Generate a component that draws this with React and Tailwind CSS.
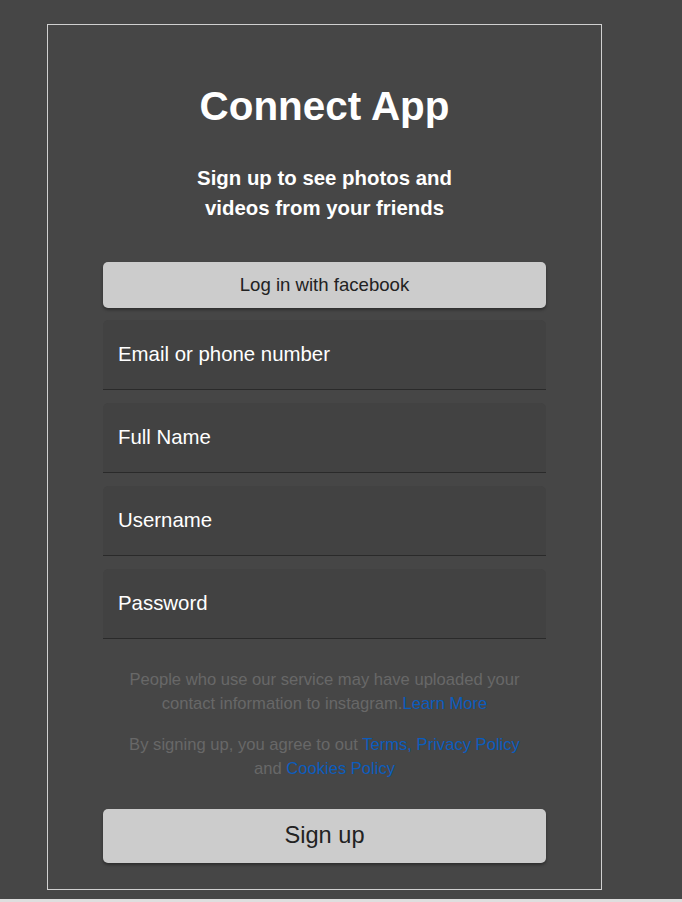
import React from 'react';

const fields = ['Email or phone number', 'Full Name', 'Username', 'Password'];

const App = () => {
  return (
    <div className="min-h-screen bg-[#dedede]" style={{ fontFamily: '"Liberation Sans", Arial, sans-serif' }}>
      <div className="h-[899px] bg-[#464646] pt-6">
        {/* Card */}
        <div className="ml-[47px] w-[555px] h-[866px] border border-[#d0d0d0] px-[55px] pt-[57px]">
          <h1 className="text-center text-[40.4px] leading-[48px] font-bold text-white">Connect App</h1>
          <p className="mx-auto mt-[33px] w-[275px] text-center text-[20.4px] leading-[30px] font-bold text-white">
            Sign up to see photos and videos from your friends
          </p>

          <button className="mt-[39px] w-full h-[46px] rounded-[5px] bg-[#cccccc] text-[18.6px] text-[#222] shadow-[0_2px_3px_rgba(0,0,0,0.35)]">
            Log in with facebook
          </button>

          {/* Inputs */}
          <div className="mt-[12px] flex flex-col gap-[13px]">
            {fields.map((f) => (
              <div
                key={f}
                className="h-[70px] rounded-t-[5px] bg-[#424242] border-b border-[#2a2a2a] pl-[15px] flex items-center text-[20.4px] text-white"
              >
                {f}
              </div>
            ))}
          </div>

          <p className="mt-[29px] px-[8px] text-center text-[16.6px] leading-[24px] text-[#686868]">
            People who use our service may have uploaded your contact information to instagram.
            <span className="text-[#0c5cbd]">Learn More</span>
          </p>
          <p className="mt-[17px] text-center text-[16.6px] leading-[24px] text-[#686868]">
            By signing up, you agree to out <span className="text-[#0c5cbd]">Terms, Privacy Policy</span>
            <br />
            and <span className="text-[#0c5cbd]">Cookies Policy</span>
          </p>

          <button className="mt-[28px] w-full h-[54px] rounded-[5px] bg-[#cccccc] text-[23.6px] text-[#222] shadow-[0_2px_3px_rgba(0,0,0,0.35)]">
            Sign up
          </button>
        </div>
      </div>
    </div>
  );
};

export default App;
